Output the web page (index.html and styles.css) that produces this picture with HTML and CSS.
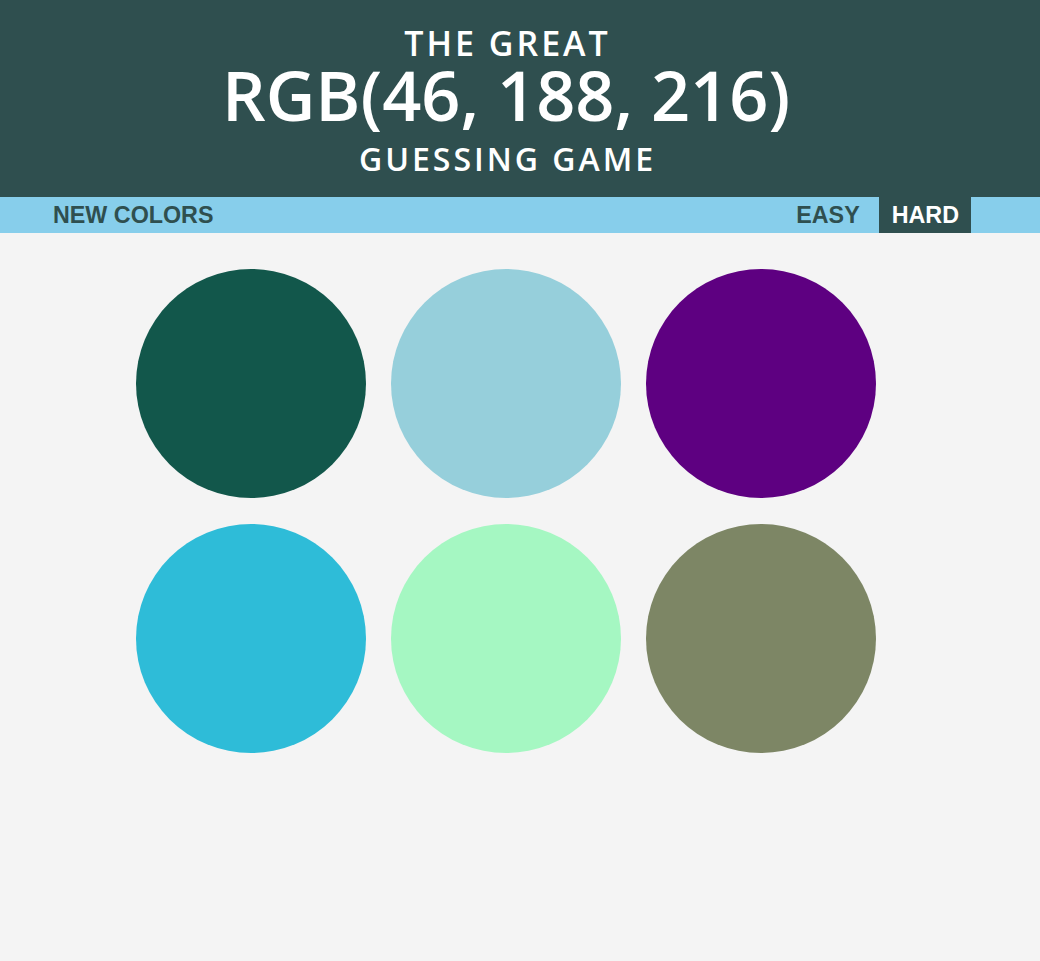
FILE: index.html
```html
<!DOCTYPE html>
<html>
<head>
<meta charset="utf-8">
<link rel="stylesheet" href="styles.css">
</head>
<body>
<header class="header">
  <div class="line small">THE GREAT</div>
  <div class="line big">RGB(46, 188, 216)</div>
  <div class="line small2">GUESSING GAME</div>
</header>
<nav class="bar">
  <button class="btn new">NEW COLORS</button>
  <span class="msg"></span>
  <div class="modes">
    <button class="btn easy">EASY</button>
    <button class="btn active">HARD</button>
  </div>
</nav>
<main class="grid">
  <div class="sq" style="background:#12574B"></div>
  <div class="sq" style="background:#96CFDB"></div>
  <div class="sq" style="background:#5E0081"></div>
  <div class="sq" style="background:#2EBCD8"></div>
  <div class="sq" style="background:#A5F7C2"></div>
  <div class="sq" style="background:#7D8665"></div>
</main>
</body>
</html>
```
FILE: styles.css
```css
html, body {
  margin: 0;
  padding: 0;
  background: #f4f4f4;
  height: 100%;
}
.header {
  background: #2f4f4f;
  color: #fff;
  text-align: center;
  font-family: "Open Sans", sans-serif;
  font-weight: 600;
  height: 197px;
  box-sizing: border-box;
  padding: 26px 28px 0 0;
}
.line { line-height: 1; white-space: nowrap; }
.small { font-size: 34px; letter-spacing: 3px; padding-left: 3px; }
.big { font-size: 68.5px; margin-top: 1px; }
.small2 { font-size: 32px; letter-spacing: 3px; padding-left: 3px; margin-top: 13px; }
.bar {
  background: #87ceeb;
  height: 36px;
  display: flex;
  align-items: stretch;
  padding: 0 69px 0 41px;
}
.btn {
  border: none;
  background: transparent;
  color: #2f4f4f;
  font-family: "Liberation Sans", Arial, sans-serif;
  font-weight: 700;
  font-size: 23.3px;
  padding: 0 12px;
  height: 36px;
  margin: 0;
}
.btn.easy { margin-right: 7px; }
.msg { flex: 1; }
.modes { display: flex; }
.btn.active { background: #2f4f4f; color: #fff; padding: 0 12px 0 13px; }
.grid {
  width: 768px;
  margin: 36px auto 0;
  display: grid;
  grid-template-columns: repeat(3, 230px);
  grid-auto-rows: 229px;
  column-gap: 25px;
  row-gap: 26px;
}
.sq { border-radius: 50%; }
```
